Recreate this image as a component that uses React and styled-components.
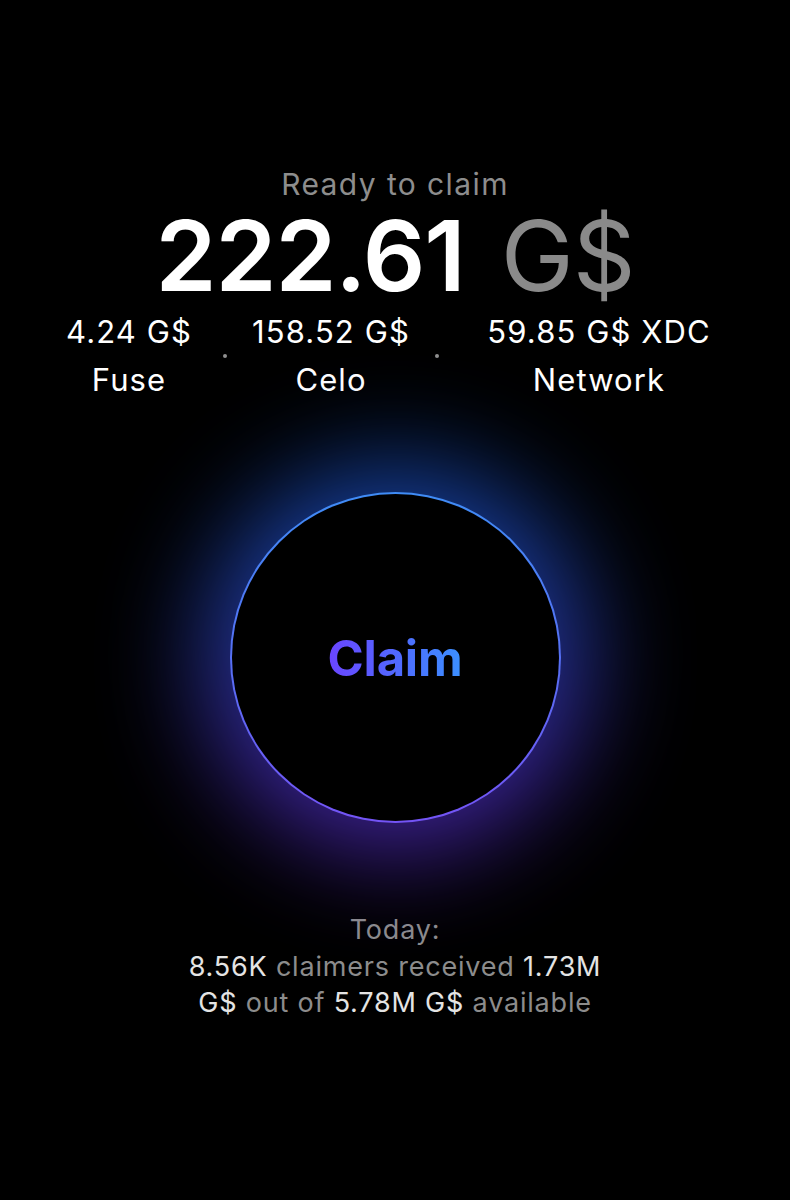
import React from "react";
import styled, { createGlobalStyle } from "styled-components";

const GlobalStyle = createGlobalStyle`
  html, body {
    margin: 0;
    padding: 0;
    background: #000;
  }
  body {
    font-family: Inter, "Noto Sans", "Liberation Sans", sans-serif;
    color: #fff;
    -webkit-font-smoothing: antialiased;
  }
`;

const Page = styled.main`
  min-height: 1200px;
  background: #000;
  display: flex;
  flex-direction: column;
  align-items: center;
  padding-top: 171px;
  box-sizing: border-box;
  overflow: hidden;
`;

const Caption = styled.div`
  font-size: 30px;
  line-height: 26px;
  font-weight: 400;
  color: #8d8d8d;
  letter-spacing: 1.4px;
`;

const TotalRow = styled.div`
  display: flex;
  align-items: baseline;
  gap: 36px;
  margin-top: 10px;
  line-height: 98px;
  font-size: 98px;
  letter-spacing: -1.1px;
`;

const TotalAmount = styled.span`
  font-weight: 600;
  color: #fff;
`;

const TotalUnit = styled.span`
  font-weight: 400;
  color: #8a8a8a;
`;

const ChainRow = styled.div`
  display: flex;
  align-items: center;
  margin-top: 3px;
  padding-left: 4px;
`;

const Chain = styled.div`
  width: ${(p) => p.$w}px;
  display: flex;
  flex-direction: column;
  align-items: center;
  font-size: 31px;
  line-height: 48px;
  color: #fff;
  white-space: nowrap;
  letter-spacing: 1.1px;
`;

const Dot = styled.span`
  width: 4px;
  height: 4px;
  border-radius: 50%;
  background: #8f8f8f;
  flex: none;
`;

const Orb = styled.div`
  position: relative;
  width: 331px;
  height: 331px;
  margin-top: 88px;

  &::before {
    content: "";
    position: absolute;
    inset: -28px;
    border-radius: 50%;
    background: linear-gradient(180deg, #1a62e6 0%, #2d52de 40%, #5536e2 75%, #6a32e6 100%);
    filter: blur(52px);
    opacity: 0.7;
  }
`;

const ClaimButton = styled.button`
  position: relative;
  width: 100%;
  height: 100%;
  border-radius: 50%;
  border: 2px solid transparent;
  background:
    linear-gradient(#000, #000) padding-box,
    linear-gradient(180deg, #3f8cf6 0%, #5670f4 50%, #7454f6 100%) border-box;
  display: flex;
  align-items: center;
  justify-content: center;
  cursor: pointer;
  padding: 0;
  box-sizing: border-box;
`;

const ClaimLabel = styled.span`
  font-family: Inter, "Noto Sans", sans-serif;
  font-size: 49px;
  font-weight: 700;
  line-height: 1;
  letter-spacing: -0.2px;
  background: linear-gradient(90deg, #6a45ff 0%, #4f6cff 55%, #3b90ff 100%);
  -webkit-background-clip: text;
  background-clip: text;
  color: transparent;
  padding-top: 2px;
`;

const Stats = styled.div`
  margin-top: 89px;
  display: flex;
  flex-direction: column;
  align-items: center;
  font-size: 27px;
  line-height: 36.5px;
  color: #8c8c8c;
  letter-spacing: 0.8px;
`;

const StatLine = styled.div`
  white-space: nowrap;
`;

const Strong = styled.span`
  color: #e4e4e4;
`;

const chains = [
  { w: 188, amount: "4.24 G$", name: "Fuse" },
  { w: 208, amount: "158.52 G$", name: "Celo" },
  { w: 320, amount: "59.85 G$ XDC", name: "Network" },
];

export default function App() {
  return (
    <>
      <GlobalStyle />
      <Page>
        <Caption>Ready to claim</Caption>
        <TotalRow>
          <TotalAmount>222.61</TotalAmount>
          <TotalUnit>G$</TotalUnit>
        </TotalRow>
        <ChainRow>
          {chains.map((c, i) => (
            <React.Fragment key={c.name}>
              {i > 0 && <Dot />}
              <Chain $w={c.w}>
                <span>{c.amount}</span>
                <span>{c.name}</span>
              </Chain>
            </React.Fragment>
          ))}
        </ChainRow>
        <Orb>
          <ClaimButton>
            <ClaimLabel>Claim</ClaimLabel>
          </ClaimButton>
        </Orb>
        <Stats>
          <StatLine>Today:</StatLine>
          <StatLine>
            <Strong>8.56K</Strong> claimers received <Strong>1.73M</Strong>
          </StatLine>
          <StatLine>
            <Strong>G$</Strong> out of <Strong>5.78M G$</Strong> available
          </StatLine>
        </Stats>
      </Page>
    </>
  );
}
